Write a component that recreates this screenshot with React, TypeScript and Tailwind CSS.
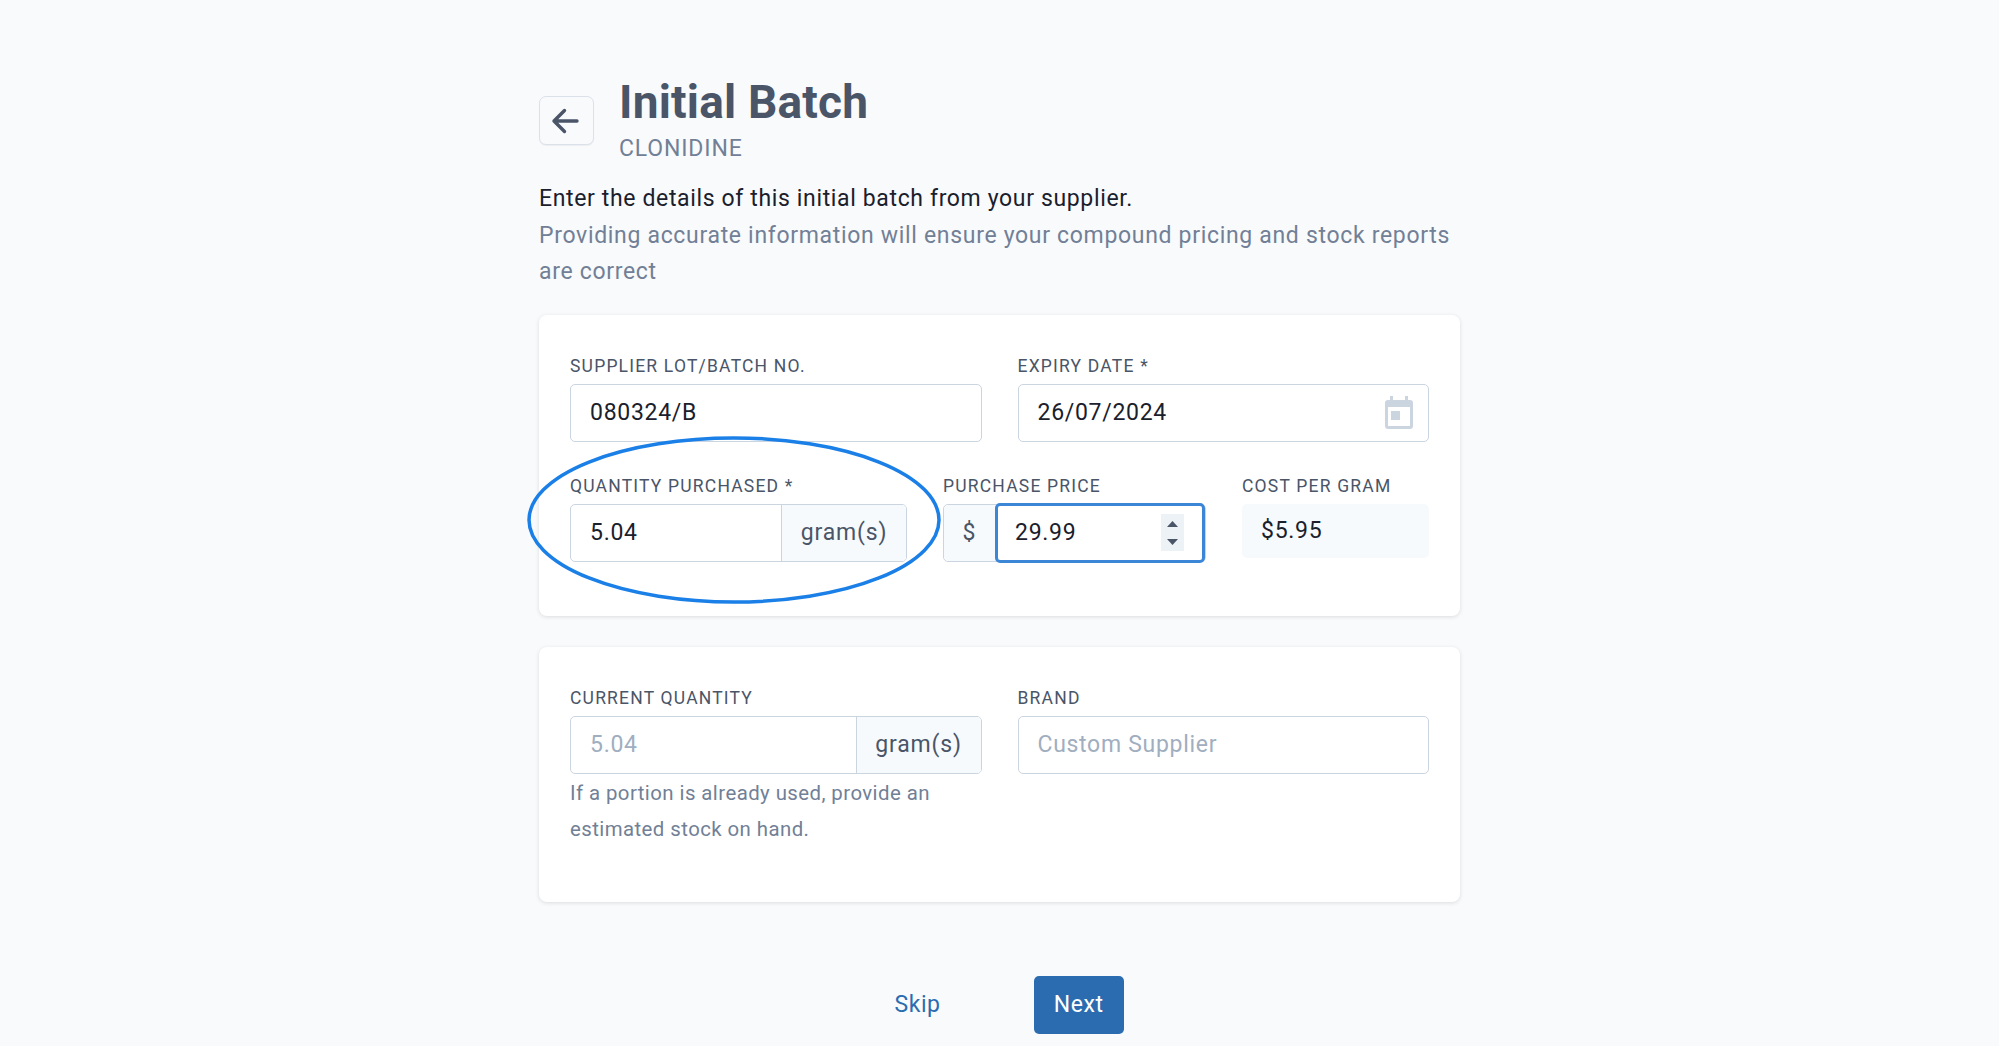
import React from "react";

const labelCls = "block text-[17.5px] leading-[20px] tracking-[1.2px] uppercase text-[#4a5568] mb-[8px]";
const boxCls = "h-[57.5px] border border-[#cbd5e0] rounded-[5px] bg-white flex items-center text-[23px] tracking-[0.7px] text-[#1a202c]";
const addonCls = "h-full flex items-center justify-center bg-[#f7fafc] text-[#4a5568] text-[23px] tracking-[0.85px]";

function ArrowLeft() {
  return (
    <svg width="28" height="28" viewBox="0 0 28 28" fill="none" stroke="#4a5568" strokeWidth="3.4" strokeLinecap="round" strokeLinejoin="round">
      <path d="M26 14H3M13.5 3.5L3 14l10.5 10.5" />
    </svg>
  );
}

function Calendar() {
  return (
    <svg width="28" height="33" viewBox="0 0 28 33" fill="#cbd5e0">
      <path fillRule="evenodd" d="M5 0h3v4h12V0h3v4h2a3 3 0 0 1 3 3v23a3 3 0 0 1-3 3H3a3 3 0 0 1-3-3V7a3 3 0 0 1 3-3h2V0zM3 11v19h22V11H3z" />
      <rect x="6" y="15" width="9" height="9" />
    </svg>
  );
}

export default function App() {
  return (
    <div className="min-h-[1046px] h-[1046px] overflow-hidden bg-[#f9fafc] font-['Roboto',sans-serif]">
      <div className="w-[921px] ml-[539px] pt-[75px]">
        <div className="flex items-start h-[91px]">
          <button className="w-[55px] h-[49px] mt-[21px] border-[1.5px] border-[#dbe1ea] rounded-[7px] bg-[#f9fafc] flex items-center justify-center pr-[3px] shadow-[0_1px_1px_rgba(0,0,0,0.05)]">
            <ArrowLeft />
          </button>
          <div className="ml-[25px]">
            <h1 className="text-[46px] leading-[54px] font-bold tracking-[0.2px] text-[#4a5568]">Initial Batch</h1>
            <div className="text-[23px] leading-[36px] tracking-[0.85px] text-[#718096] mt-[2px]">CLONIDINE</div>
          </div>
        </div>
        <p className="mt-[15px] text-[23px] leading-[36.7px] tracking-[0.64px] text-[#1a202c]">Enter the details of this initial batch from your supplier.</p>
        <p className="text-[23px] leading-[36.7px] tracking-[0.68px] text-[#718096]">
          Providing accurate information will ensure your compound pricing and stock reports are correct
        </p>

        <div className="relative mt-[24px] h-[301px] bg-white rounded-[8px] shadow-[0_1px_4px_rgba(0,0,0,0.12)] px-[31px] pt-[41px]">
          <div className="grid grid-cols-2 gap-x-[36px]">
            <div>
              <label className={labelCls}>Supplier Lot/Batch No.</label>
              <div className={boxCls + " px-[19px]"}>080324/B</div>
            </div>
            <div>
              <label className={labelCls}>Expiry Date *</label>
              <div className={boxCls + " px-[19px] justify-between"}>
                <span>26/07/2024</span>
                <span className="-mr-[4px] -mt-[1px] flex"><Calendar /></span>
              </div>
            </div>
          </div>
          <div className="flex mt-[34.5px]">
            <div className="w-[337px]">
              <label className={labelCls}>Quantity Purchased *</label>
              <div className={boxCls + " overflow-hidden"}>
                <div className="flex-1 px-[19px]">5.04</div>
                <div className={addonCls + " w-[125px] border-l border-[#cbd5e0]"}>gram(s)</div>
              </div>
            </div>
            <div className="w-[263px] ml-[36px]">
              <label className={labelCls}>Purchase Price</label>
              <div className={boxCls + " relative"}>
                <div className={addonCls + " w-[51px] rounded-l-[5px]"}>$</div>
                <div className="flex-1 h-[60px] -my-[2px] border-[3px] border-[#3b86d6] rounded-[5px] bg-white flex items-center justify-between pl-[17px] pr-[18px]">
                  <span>29.99</span>
                  <span className="w-[23px] h-[37px] bg-[#edf2f7] flex flex-col items-center justify-center gap-[12px]">
                    <svg width="11" height="6" viewBox="0 0 11 6" fill="#4a5568"><path d="M5.5 0L11 6H0z" /></svg>
                    <svg width="11" height="6" viewBox="0 0 11 6" fill="#4a5568"><path d="M0 0h11L5.5 6z" /></svg>
                  </span>
                </div>
              </div>
            </div>
            <div className="flex-1 ml-[36px]">
              <label className={labelCls}>Cost per Gram</label>
              <div className="h-[54px] rounded-[5px] bg-[#f7fafc] flex items-center px-[19px] text-[23px] tracking-[0.7px] text-[#1a202c]">$5.95</div>
            </div>
          </div>
          <svg className="absolute left-[-12px] top-[121px] pointer-events-none" width="415" height="168" viewBox="0 0 415 168" fill="none">
            <ellipse cx="207" cy="84" rx="205" ry="82" stroke="#1a7fe6" strokeWidth="3.5" />
          </svg>
        </div>

        <div className="mt-[31px] h-[255px] bg-white rounded-[8px] shadow-[0_1px_4px_rgba(0,0,0,0.12)] px-[31px] pt-[41px]">
          <div className="grid grid-cols-2 gap-x-[36px]">
            <div>
              <label className={labelCls}>Current Quantity</label>
              <div className={boxCls + " overflow-hidden"}>
                <div className="flex-1 px-[19px] text-[#a0aec0]">5.04</div>
                <div className={addonCls + " w-[125px] border-l border-[#cbd5e0]"}>gram(s)</div>
              </div>
              <p className="mt-[1px] text-[20.4px] leading-[36.7px] tracking-[0.43px] text-[#718096]">If a portion is already used, provide an estimated stock on hand.</p>
            </div>
            <div>
              <label className={labelCls}>Brand</label>
              <div className={boxCls + " px-[19px] text-[#a0aec0]"}>Custom Supplier</div>
            </div>
          </div>
        </div>

        <div className="mt-[74px] flex items-center justify-center gap-[93px] pl-[19px]">
          <a className="text-[23px] tracking-[0.6px] text-[#2b6cb0]">Skip</a>
          <button className="w-[90px] h-[58px] rounded-[5px] bg-[#2b6cb0] text-white text-[23px] tracking-[0.6px]">Next</button>
        </div>
      </div>
    </div>
  );
}
